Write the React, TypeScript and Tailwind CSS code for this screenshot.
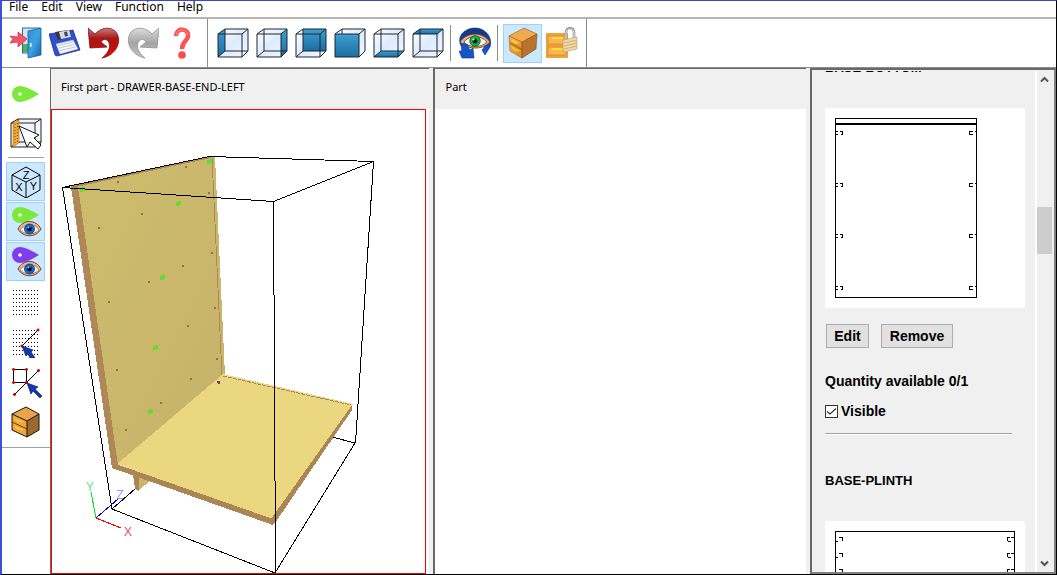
import type { ReactNode } from "react";

type Face = "left" | "right" | "back" | "front" | "bottom" | "top";

const FACE_POINTS: Record<Face, string> = {
  left: "1,7 8,2 8,24 1,30",
  right: "25,7 31,2 31,24 25,30",
  back: "8,2 31,2 31,24 8,24",
  front: "1,7 25,7 25,30 1,30",
  bottom: "1,30 8,24 31,24 25,30",
  top: "1,7 8,2 31,2 25,7",
};

function Icon({ children }: { children: ReactNode }) {
  return (
    <svg viewBox="0 0 32 32" className="size-8" aria-hidden="true">
      {children}
    </svg>
  );
}

function Gradients() {
  return (
    <svg className="absolute size-0" aria-hidden="true">
      <defs>
        <linearGradient id="faceBlue" x1="0" y1="0" x2="0" y2="1">
          <stop offset="0" stopColor="#3fa0d0" />
          <stop offset="1" stopColor="#1b6da3" />
        </linearGradient>
        <linearGradient id="glass" x1="0" y1="0" x2="1" y2="1">
          <stop offset="0" stopColor="#ffffff" />
          <stop offset="0.5" stopColor="#deebfd" />
          <stop offset="1" stopColor="#f4f8ff" />
        </linearGradient>
        <linearGradient id="redArrow" x1="0" y1="0" x2="0" y2="1">
          <stop offset="0" stopColor="#c98080" />
          <stop offset="0.35" stopColor="#a81616" />
          <stop offset="1" stopColor="#f00000" />
        </linearGradient>
        <linearGradient id="greyArrow" x1="0" y1="0" x2="0" y2="1">
          <stop offset="0" stopColor="#dddddd" />
          <stop offset="0.5" stopColor="#a4a4a4" />
          <stop offset="1" stopColor="#c4c4c4" />
        </linearGradient>
        <linearGradient id="door" x1="0" y1="0" x2="1" y2="1">
          <stop offset="0" stopColor="#2f8fd4" />
          <stop offset="0.5" stopColor="#3ba4e4" />
          <stop offset="1" stopColor="#1560a8" />
        </linearGradient>
        <linearGradient id="orange" x1="0" y1="0" x2="1" y2="1">
          <stop offset="0" stopColor="#f9b552" />
          <stop offset="1" stopColor="#dd8726" />
        </linearGradient>
        <linearGradient id="deepBlue" x1="0" y1="0" x2="0" y2="1">
          <stop offset="0" stopColor="#16357f" />
          <stop offset="0.5" stopColor="#0f3fa8" />
          <stop offset="1" stopColor="#1a63d8" />
        </linearGradient>
      </defs>
    </svg>
  );
}

function CubeIcon({ face }: { face: Face }) {
  return (
    <Icon>
      <polygon points="1,7 8,2 31,2 31,24 25,30 1,30" fill="url(#glass)" />
      <polygon points={FACE_POINTS[face]} fill="url(#faceBlue)" />
      <g fill="none" stroke="#1d2733" strokeWidth="1">
        {face !== "front" && <path d="M8 24H31M8 24V7M1 30L8 24" />}
        <path d="M8 7V2H31V24L25 30M1 7L8 2M25 7L31 2" />
        <path d="M1 7H25V30H1Z" />
      </g>
    </Icon>
  );
}

function ExitIcon() {
  return (
    <Icon>
      <rect x="12.500" y="1" width="17" height="25" fill="#cfe6f5" stroke="#1e6aa5" />
      <rect x="13" y="17" width="6" height="8" fill="#4fb455" />
      <path d="M18 4L31 1V28L18 31Z" fill="url(#door)" stroke="#1b5e99" strokeWidth=".8" />
      <rect x="20" y="16" width="1.500" height="4" fill="#e8f4ff" />
      <path d="M0 9L8 10V5L17 12L8 20V15L0 16L3 12Z" fill="#f2566c" stroke="#d2354d" strokeWidth=".8" />
    </Icon>
  );
}

function SaveIcon() {
  return (
    <Icon>
      <path d="M0 7L24 3L31 23L8 29L6 28Z" fill="#2f50cc" stroke="#1d2f86" strokeWidth=".8" />
      <path d="M6 5L19 3L21 10L9 13Z" fill="#35363c" />
      <path d="M10 5L20 3L22 10L12 12Z" fill="#d7dae2" />
      <path d="M15 5L18 4.500L19 9L16 9.500Z" fill="#3c4660" />
      <path d="M7 17L24 13L29 22L11 27Z" fill="#f7f7f7" stroke="#9fb0e4" strokeWidth=".5" />
      <path d="M9 18.500L24 15M10 21L25 17.500M11 23.500L26.500 20" stroke="#b9bcc4" strokeWidth=".8" />
    </Icon>
  );
}

const CURVED_ARROW =
  "M0 1L7 7C14 -1 27 -1 30 9C33 19 25 29 14 31C22 25 23 18 20 14C17 11 14 13 13 15L19 20L2 21Z";

function UndoIcon() {
  return (
    <Icon>
      <path d={CURVED_ARROW} fill="url(#redArrow)" stroke="#6e1010" strokeWidth=".8" />
    </Icon>
  );
}

function RedoIcon() {
  return (
    <Icon>
      <g transform="matrix(-1 0 0 1 32 0)">
        <path d={CURVED_ARROW} fill="url(#greyArrow)" stroke="#8f8f8f" strokeWidth=".8" />
      </g>
    </Icon>
  );
}

function HelpIcon() {
  return (
    <Icon>
      <path
        d="M10 9C10 0 23 1 22 9C22 14 16 14 16 22"
        fill="none"
        stroke="#fb5252"
        strokeWidth="4.500"
      />
      <path d="M10.500 8C11 1 21 1 21.500 8" fill="none" stroke="#ff8d8d" strokeWidth="1" />
      <circle cx="16" cy="28" r="3.800" fill="#fb4d4d" />
    </Icon>
  );
}

function ViewIcon() {
  return (
    <Icon>
      <path
        d="M2 19C-3 8 7 1 16 1C27 1 34 11 31 20L26 28L23 23C27 19 27 13 23 9C18 5 10 7 8 13L8 19Z"
        fill="url(#deepBlue)"
        stroke="#0c2a70"
        strokeWidth=".6"
      />
      <path d="M1 15C7 5 24 4 31 15C24 23 9 23 1 15Z" fill="#e9ad82" stroke="#5f2b12" strokeWidth=".8" />
      <path d="M5 15C10 8 22 8 28 15C22 21 10 21 5 15Z" fill="#fff" stroke="#703820" strokeWidth=".8" />
      <circle cx="16" cy="14" r="5.200" fill="#13b647" stroke="#087030" />
      <circle cx="16" cy="14" r="2.500" fill="#001c0c" />
      <circle cx="14.500" cy="12.500" r="1" fill="#fff" />
      <path d="M4 16C2 19 2 21 3 24H0L3 31H15L14 21L11 23C10 21 9 20 9 18Z" fill="#1455c8" stroke="#0b348c" strokeWidth=".6" />
    </Icon>
  );
}

function CabinetIcon() {
  return (
    <Icon>
      <path d="M2 9L17 1L30 7L15 16Z" fill="#efab50" stroke="#9a5914" strokeWidth=".6" />
      <path d="M2 9L15 15V31L3 24Z" fill="url(#orange)" stroke="#9a5914" strokeWidth=".6" />
      <path d="M15 15L30 7L29 22L15 31Z" fill="#b8742e" stroke="#85490d" strokeWidth=".6" />
      <path d="M3 15.500L15 22M3 16.500L15 23" stroke="#8b4d10" strokeWidth=".6" />
      <path d="M5 13Q8 16 12 15.500M5 20Q8 24 12 23.500" fill="none" stroke="#ffe316" strokeWidth="1.200" />
    </Icon>
  );
}

function OutlinedCabinetIcon() {
  return (
    <Icon>
      <path d="M2 8L16 1L29 8L17 15Z" fill="#e9a34a" />
      <path d="M2 8L17 15V31L2 24Z" fill="#eda341" />
      <path d="M17 15L29 8V24L17 31Z" fill="#9c6a2e" />
      <path d="M2 16L17 23" stroke="#704012" />
      <path d="M5 13Q8 16 13 15.500M5 20Q8 24 13 23.500" fill="none" stroke="#f6d22b" strokeWidth="1.500" />
      <path d="M2 8L16 1L29 8V24L17 31L2 24ZM2 8L17 15V31M17 15L29 8" fill="none" stroke="#1b1208" strokeWidth="1" />
    </Icon>
  );
}

function LockIcon() {
  return (
    <Icon>
      <path d="M0 6H22V31H0Z" fill="#efa13c" />
      <path d="M2 9H20V17H2ZM2 20H20V28H2Z" fill="#f8b654" stroke="#d98b28" strokeWidth=".8" />
      <path d="M6 11H16M6 22H16" stroke="#fff21c" strokeWidth="1.500" />
      <path d="M20 13V5C20 0 28 0 28 5V12" fill="none" stroke="#8f8f8f" strokeWidth="2.600" />
      <path d="M20 12V5C20 1 28 1 28 5V11" fill="none" stroke="#e8e8e8" strokeWidth="1" />
      <path d="M17 13L31 10V22L19 25L17 23Z" fill="#ecd8ab" stroke="#b99a5c" strokeWidth=".6" />
      <path d="M18 16L31 13M18 19L31 16M18 22L31 19" stroke="#c9a968" strokeWidth=".8" />
    </Icon>
  );
}

function PinShape({ color, y }: { color: string; y: number }) {
  return (
    <g>
      <path
        d={`M2 ${y}A8 8 0 0 1 10 ${y - 8}Q16 ${y - 8} 29 ${y}Q16 ${y + 8} 10 ${y + 8}A8 8 0 0 1 2 ${y}Z`}
        fill={color}
      />
      <circle cx="10" cy={y} r="1.800" fill="#fff" />
    </g>
  );
}

function PinIcon() {
  return (
    <Icon>
      <PinShape color="#7be93a" y={16} />
    </Icon>
  );
}

function PinEyeIcon({ color }: { color: string }) {
  return (
    <Icon>
      <PinShape color={color} y={9} />
      <path d="M8 23C13 13 26 13 31 23C26 32 13 32 8 23Z" fill="#eab78e" stroke="#6d4023" strokeWidth="1" />
      <path d="M10 24C15 17 25 17 29 24C24 29 15 29 10 24Z" fill="#fff" stroke="#6d4023" strokeWidth=".6" />
      <circle cx="19.500" cy="23" r="5" fill="#1769c9" stroke="#0b357a" strokeWidth=".8" />
      <circle cx="19.500" cy="23" r="2.300" fill="#00040f" />
      <circle cx="18.500" cy="21.500" r=".8" fill="#fff" />
    </Icon>
  );
}

function DrillFaceIcon() {
  return (
    <Icon>
      <path d="M1 5L8 1H31V25L25 29H1Z" fill="#f1f5fb" stroke="#222" />
      <path d="M1 5H25V29M25 5L31 1M8 1V24H31M1 29L8 24" fill="none" stroke="#222" />
      <path d="M3 5L9 2V25L3 29Z" fill="#f4aa2c" stroke="#a36a0c" strokeWidth=".5" />
      <path d="M5 6V27M7.500 5V26" stroke="#704400" strokeWidth="1" strokeDasharray="1 2" />
      <path d="M9 8L29 17L24 20L31 27L28 31L20 24L17 29Z" fill="#fff" stroke="#111" strokeWidth="1" />
    </Icon>
  );
}

function AxesCubeIcon() {
  return (
    <Icon>
      <path
        d="M16 1L30 9V24L16 32L2 24V9ZM2 9L16 16L30 9M16 16V32"
        fill="none"
        stroke="#000"
        strokeWidth="1"
      />
      <g fontFamily="Liberation Sans, sans-serif" fontSize="11" textAnchor="middle">
        <text x="16" y="12.500">Z</text>
        <text x="9" y="25">X</text>
        <text x="23.500" y="24">Y</text>
      </g>
    </Icon>
  );
}

function Dots() {
  const steps = [0, 1, 2, 3, 4, 5, 6, 7, 8];
  const rows = [0, 1, 2, 3, 4, 5, 6];
  return (
    <g fill="#000" shapeRendering="crispEdges">
      {rows.map((r) =>
        steps.map((c) => <rect key={`${r}-${c}`} x={3 + c * 3} y={4 + r * 4} width="1" height="1" />),
      )}
    </g>
  );
}

function PointerShape() {
  return <path d="M0 0L11 4L8 6L15 13L13 15L6 8L4 11Z" fill="#1238b0" stroke="#0a1e66" strokeWidth=".7" />;
}

function GridIcon() {
  return (
    <Icon>
      <Dots />
    </Icon>
  );
}

function GridSnapIcon() {
  return (
    <Icon>
      <Dots />
      <path d="M12 20L28 4" stroke="#000" />
      <path d="M26.500 4H29.500M28 2.500V5.500M10.500 20H13.500M12 18.500V21.500" stroke="#d40000" strokeWidth="1.500" />
      <path d="M12 20L23 24L21 26L25 32H20L18 28L16 30Z" fill="#1238b0" stroke="#0a1e66" strokeWidth=".7" />
    </Icon>
  );
}

function ShapeSnapIcon() {
  return (
    <Icon>
      <path d="M3.500 3.500H16.500V16.500H3.500Z" fill="none" stroke="#000" />
      <path d="M4 29L29 4" stroke="#000" />
      <path
        d="M2 3.500H5M3.500 2V5M15 3.500H18M16.500 2V5M2 16.500H5M3.500 15V18M15 16.500H18M16.500 15V18M27 4.500H30M28.500 3V6M3 28.500H6M4.500 27V30"
        stroke="#d40000"
        strokeWidth="1.500"
      />
      <g transform="translate(17 17)">
        <PointerShape />
      </g>
    </Icon>
  );
}

interface ToolProps {
  label: string;
  active?: boolean;
  children: ReactNode;
}

function Tool({ label, active = false, children }: ToolProps) {
  return (
    <button
      type="button"
      aria-label={label}
      aria-pressed={active}
      className={
        active
          ? "flex size-[39px] shrink-0 items-center justify-center border border-[#99d1ff] bg-[#cce8ff]"
          : "flex size-[39px] shrink-0 items-center justify-center border border-transparent hover:bg-[#e5f3ff]"
      }
    >
      {children}
    </button>
  );
}

const FACES: Face[] = ["left", "right", "back", "front", "bottom", "top"];

function MenuBar() {
  return (
    <nav
      aria-label="Main menu"
      className="flex h-4 shrink-0 items-center gap-[13px] pb-1 pl-[7px] font-['Noto_Sans','Open_Sans',sans-serif] text-xs leading-3"
    >
      {["File", "Edit", "View", "Function", "Help"].map((item) => (
        <button key={item} type="button" className="hover:bg-[#e5f3ff]">
          {item}
        </button>
      ))}
    </nav>
  );
}

function Toolbar() {
  return (
    <div className="flex h-[51px] shrink-0 items-stretch border-t-2 border-b border-t-[#b4b4b4] border-b-[#8c8c8c]">
      <div className="flex items-center border-r border-[#8c8c8c] pr-[6px] pl-1">
        <Tool label="Exit"><ExitIcon /></Tool>
        <Tool label="Save"><SaveIcon /></Tool>
        <Tool label="Undo"><UndoIcon /></Tool>
        <Tool label="Redo"><RedoIcon /></Tool>
        <Tool label="Help"><HelpIcon /></Tool>
      </div>
      <div className="flex items-center border-r border-[#8c8c8c] px-[5px]">
        {FACES.map((face) => (
          <Tool key={face} label={`View ${face}`}>
            <CubeIcon face={face} />
          </Tool>
        ))}
        <span className="mr-1 ml-[3px] h-9 w-px bg-[#8c8c8c]" />
        <Tool label="Rotate view"><ViewIcon /></Tool>
        <span className="mr-[5px] ml-[3px] h-9 w-px bg-[#8c8c8c]" />
        <Tool label="Show cabinet" active><CabinetIcon /></Tool>
        <Tool label="Lock cabinet"><LockIcon /></Tool>
      </div>
    </div>
  );
}

function SideTools() {
  return (
    <aside className="w-12 shrink-0">
      <div className="flex flex-col gap-px border-b border-[#a0a0a0] px-1 py-[6px]">
        <Tool label="Points"><PinIcon /></Tool>
        <Tool label="Select face"><DrillFaceIcon /></Tool>
        <span className="mx-[2px] my-[3px] h-px bg-[#a0a0a0]" />
        <Tool label="Axes" active><AxesCubeIcon /></Tool>
        <Tool label="Show points" active><PinEyeIcon color="#7be93a" /></Tool>
        <Tool label="Show anchors" active><PinEyeIcon color="#7f3df0" /></Tool>
        <Tool label="Grid"><GridIcon /></Tool>
        <Tool label="Snap to grid"><GridSnapIcon /></Tool>
        <Tool label="Snap to shape"><ShapeSnapIcon /></Tool>
        <Tool label="Cabinet"><OutlinedCabinetIcon /></Tool>
      </div>
    </aside>
  );
}

const HOLES: [number, number][] = [
  [117, 181], [185, 166], [98, 227], [141, 213], [208, 192], [108, 301], [148, 281], [182, 265],
  [211, 252], [187, 325], [214, 307], [116, 369], [216, 358], [160, 402], [125, 429], [190, 378],
];

const POINTS: [number, number][] = [
  [80, 187], [207, 159], [176, 201], [160, 275], [153, 345], [148, 409],
];

function Scene() {
  return (
    <svg
      viewBox="52 110 373 463"
      preserveAspectRatio="xMinYMin meet"
      className="block h-full w-full"
      role="img"
      aria-label="Drawer base with left end panel"
      shapeRendering="crispEdges"
    >
      <defs>
        <linearGradient id="sidePanel" x1="0" y1="0" x2="1" y2="1">
          <stop offset="0" stopColor="#cebc6d" />
          <stop offset="1" stopColor="#c6b36b" />
        </linearGradient>
      </defs>
      <path d="M332 437L355 443L275 573L112 509L135 489" fill="none" stroke="#000" />
      <polygon points="133,474 139,476 139,491 135,489" fill="#ac8554" />
      <polygon points="139,476 150,481 139,490" fill="#c9b66b" />
      <polygon points="71,187 211,157 215,157 225,376 117,467" fill="url(#sidePanel)" />
      <path d="M71 187L211 157" stroke="#b08757" strokeWidth="2" />
      <polygon points="71,187 78,187 118,465 112,468" fill="#b08757" />
      <path d="M212 158L222 376" stroke="#b08757" strokeDasharray="20 2" />
      <polygon points="117,464 223,374 353,404 273,521" fill="#ebd77f" />
      <path d="M223 376L351 405" stroke="#ac8554" strokeDasharray="4 1" />
      <polygon points="116,464 273,519 273,525 112,468" fill="#ac8554" />
      <polygon points="352,405 352,410 275,523 271,525 271,519" fill="#ac8554" />
      {HOLES.map(([x, y]) => (
        <rect key={`${x}-${y}`} x={x} y={y} width="2" height="2" fill="#94713a" />
      ))}
      {POINTS.map(([x, y]) => (
        <path key={`${x}-${y}`} d={`M${x} ${y + 1}h2v-1h3v4h-2v1h-3z`} fill="#5fe02c" />
      ))}
      <path d="M217 381h3v3h-2z" fill="#8b2f82" />
      <path d="M62.500 187.500L209.500 156.500L373.500 161.500L273.500 201.500L62.500 187.500L112 509" fill="none" stroke="#000" />
      <path d="M273.500 201.500L275.500 573M373.500 161.500L355.500 443.500" stroke="#000" />
      <path d="M96 518L91 492" stroke="#00ef20" />
      <path d="M96 518L121 528" stroke="#ff0000" />
      <path d="M96 518L118 499" stroke="#0000dd" />
      <g fontFamily="Open Sans, sans-serif" fontWeight="400" fontSize="13" textAnchor="middle">
        <text x="90" y="491" fill="#58e783">Y</text>
        <text x="120" y="499" fill="#9595ef">Z</text>
        <text x="128" y="536" fill="#f4426b">X</text>
      </g>
    </svg>
  );
}

function Marker({ x, y, flip = false }: { x: number; y: number; flip?: boolean }) {
  return flip ? (
    <path d={`M${x + 3} ${y}H${x}V${y + 3}H${x + 3}M${x + 5} ${y}h2M${x + 6} ${y + 3}h1`} />
  ) : (
    <path d={`M${x} ${y + 3}h2M${x} ${y}h2M${x + 4} ${y}h3v3h-2`} />
  );
}

function BottomDrawing() {
  return (
    <svg viewBox="0 0 200 200" className="mt-8 block size-[200px] bg-white" role="img" aria-label="BASE-BOTTOM drawing">
      <g fill="none" stroke="#000" shapeRendering="crispEdges">
        <rect x="10.500" y="10.500" width="141" height="179" />
        <path d="M11 16H151" strokeWidth="2" />
        {[23.5, 75.5, 126.5, 178.5].map((y) => (
          <g key={y}>
            <Marker x={10.5} y={y} />
            <Marker x={144.5} y={y} flip />
          </g>
        ))}
      </g>
    </svg>
  );
}

function PlinthDrawing() {
  return (
    <svg viewBox="0 0 200 200" className="mt-8 block size-[200px] bg-white" role="img" aria-label="BASE-PLINTH drawing">
      <g fill="none" stroke="#000" shapeRendering="crispEdges">
        <rect x="10.500" y="10.500" width="179" height="60" />
        {[16.5, 32.5, 48.5].map((y) => (
          <g key={y}>
            <path d={`M14 ${y}h3v3M10 ${y + 4}h3M183 ${y + 4}h3M185 ${y}h-3v3M186 ${y}h3`} />
          </g>
        ))}
      </g>
    </svg>
  );
}

interface PartCardProps {
  name: string;
  drawing: ReactNode;
  quantity?: string;
}

function PartCard({ name, drawing, quantity }: PartCardProps) {
  const id = `visible-${name}`;
  return (
    <article className="shrink-0">
      <h2 className="h-4 text-[13px] leading-4">{name}</h2>
      {drawing}
      {quantity && (
        <>
          <div className="mt-4 flex gap-3 pl-px">
            <button type="button" className="h-6 w-[43px] border border-[#adadad] bg-[#e1e1e1]">
              Edit
            </button>
            <button type="button" className="h-6 w-[72px] border border-[#adadad] bg-[#e1e1e1]">
              Remove
            </button>
          </div>
          <p className="mt-[25px]">{`Quantity available ${quantity}`}</p>
          <div className="mt-[14px] flex h-4 items-center gap-[3px]">
            <span className="grid size-[13px] place-items-center">
              <input
                id={id}
                type="checkbox"
                defaultChecked
                className="peer col-start-1 row-start-1 size-[13px] appearance-none border border-[#333] bg-white"
              />
              <svg
                viewBox="0 0 13 13"
                className="pointer-events-none invisible col-start-1 row-start-1 size-[13px] peer-checked:visible"
                aria-hidden="true"
              >
                <path d="M2 6.500L5 9L11 3.500" fill="none" stroke="#333" strokeWidth="1.200" />
              </svg>
            </span>
            <label htmlFor={id}>Visible</label>
          </div>
          <hr className="mt-[14px] mr-[23px] mb-[38px] border-t border-b border-t-[#a0a0a0] border-b-white" />
        </>
      )}
    </article>
  );
}

function ScrollBar() {
  return (
    <div className="mr-[2px] flex w-[17px] shrink-0 flex-col border-l-2 border-white bg-[#f0f0f0]">
      <button type="button" aria-label="Scroll up" className="flex h-[17px] items-center justify-center">
        <svg viewBox="0 0 9 7" className="h-[7px] w-[9px]" aria-hidden="true">
          <path d="M1 5.500L4.500 2L8 5.500" fill="none" stroke="#555" strokeWidth="2" />
        </svg>
      </button>
      <div className="flex grow flex-col">
        <span className="grow-[119]" />
        <span className="h-[47px] w-[15px] bg-[#cdcdcd]" />
        <span className="grow-[300]" />
      </div>
      <button type="button" aria-label="Scroll down" className="flex h-[17px] items-center justify-center">
        <svg viewBox="0 0 9 7" className="h-[7px] w-[9px]" aria-hidden="true">
          <path d="M1 1.500L4.500 5L8 1.500" fill="none" stroke="#555" strokeWidth="2" />
        </svg>
      </button>
    </div>
  );
}

function PanelTitle({ children }: { children: ReactNode }) {
  return (
    <h1 className="h-10 shrink-0 bg-[#f0f0f0] px-[10px] pt-[10px] font-['Noto_Sans','Open_Sans',sans-serif] text-[11px] leading-4">
      {children}
    </h1>
  );
}

export default function App() {
  return (
    <div className="flex h-screen flex-col overflow-hidden border-t border-r border-b border-l-2 border-t-[#3c46c8] border-r-black border-b-black border-l-[#3c50d8] bg-white text-black">
      <Gradients />
      <MenuBar />
      <Toolbar />
      <main className="flex min-h-0 flex-1">
        <SideTools />
        <section className="flex min-w-0 flex-[380] flex-col border-t border-l border-[#696969]">
          <PanelTitle>First part - DRAWER-BASE-END-LEFT</PanelTitle>
          <div className="mr-[3px] min-h-0 flex-1 border border-[#ff0000]">
            <Scene />
          </div>
        </section>
        <div className="w-1 shrink-0 bg-[#f0f0f0]" />
        <section className="flex min-w-0 flex-[372] flex-col border-t border-l-2 border-[#696969]">
          <PanelTitle>Part</PanelTitle>
        </section>
        <div className="w-1 shrink-0 bg-[#f0f0f0]" />
        <section className="flex w-[246px] shrink-0 border-2 border-t-[#696969] border-r-[#808080] border-b-[#808080] border-l-[#696969] bg-[#f0f0f0] pt-px">
          <div className="flex min-w-0 flex-1 flex-col overflow-hidden pl-[13px] font-['Liberation_Sans',sans-serif] text-sm leading-4 font-bold">
            <div className="-mt-[11px] flex flex-col">
              <PartCard name="BASE-BOTTOM" quantity="0/1" drawing={<BottomDrawing />} />
              <PartCard name="BASE-PLINTH" drawing={<PlinthDrawing />} />
            </div>
          </div>
          <ScrollBar />
        </section>
      </main>
    </div>
  );
}
